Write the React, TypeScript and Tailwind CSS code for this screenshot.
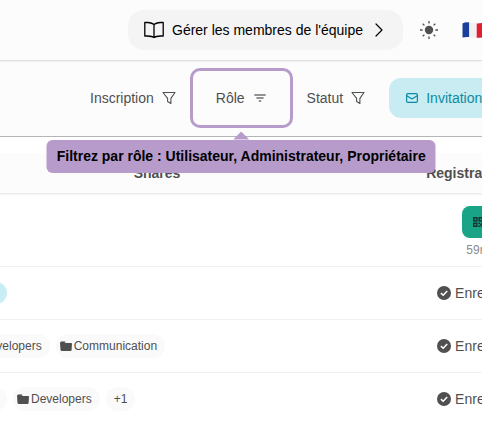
import React from 'react';

type IconProps = { className?: string };

const BookIcon: React.FC<IconProps> = ({ className }) => (
  <svg className={className} viewBox="0 0 20 18" fill="none" stroke="currentColor" strokeWidth="1.3" strokeLinejoin="round" aria-hidden="true">
    <path d="M10 3.600C8.600 2.100 6.400 1.700 3.400 1.500H.8v13.500h2.600c3 .1 5.200.4 6.600 1.500 1.400-1.100 3.600-1.400 6.600-1.500h2.600V1.500h-2.600C13.600 1.700 11.400 2.100 10 3.600zM10 3.600V17" />
  </svg>
);

const ChevronIcon: React.FC<IconProps> = ({ className }) => (
  <svg className={className} viewBox="0 0 8 14" fill="none" stroke="currentColor" strokeWidth="1.2" strokeLinecap="round" strokeLinejoin="round" aria-hidden="true">
    <path d="M1 1l6 6-6 6" />
  </svg>
);

const SunIcon: React.FC<IconProps> = ({ className }) => (
  <svg className={className} viewBox="0 0 18 18" fill="none" stroke="currentColor" strokeWidth="1.3" aria-hidden="true">
    <circle cx="9" cy="9" r="4.200" fill="currentColor" stroke="none" />
    <path d="M9 0v2.600M9 15.400V18M0 9h2.600M15.400 9H18M2.700 2.700l1.700 1.700M13.600 13.600l1.700 1.700M2.700 15.300l1.700-1.700M13.600 4.400l1.700-1.700" />
  </svg>
);

const FlagIcon: React.FC<IconProps> = ({ className }) => (
  <svg className={className} viewBox="0 0 22 16" aria-hidden="true">
    <path fill="#1b3f9c" d="M.5 1.500Q3.500-.2 7.300.6V15Q3.500 14.600.5 15.500z" />
    <path fill="#f1f1f3" d="M7.300.6q3.700.7 7.400.8V15.800q-3.700 0-7.400-.8z" />
    <path fill="#e0202f" d="M14.700 1.400Q18.500 1.500 22 .5V15q-3.500 1-7.300.8z" />
  </svg>
);

const FunnelIcon: React.FC<IconProps> = ({ className }) => (
  <svg className={className} viewBox="0 0 14 14" fill="none" stroke="currentColor" strokeWidth="1.1" strokeLinejoin="round" aria-hidden="true">
    <path d="M1 1.500h12L8.900 7.400v5.100L5.600 10.600V7.400z" />
  </svg>
);

const SortIcon: React.FC<IconProps> = ({ className }) => (
  <svg className={className} viewBox="0 0 12 8" fill="none" stroke="currentColor" strokeWidth="1.400" aria-hidden="true">
    <path d="M.3 1h11.400M2.400 4h7.200M4.800 7h2.400" />
  </svg>
);

const MailIcon: React.FC<IconProps> = ({ className }) => (
  <svg className={className} viewBox="0 0 12 10" fill="none" stroke="currentColor" strokeWidth="1.200" strokeLinejoin="round" aria-hidden="true">
    <rect x=".6" y=".6" width="10.800" height="8.800" rx="1.200" />
    <path d="M.8 2.800L4.800 5.300q1.200.8 2.400 0L11.200 2.800" />
  </svg>
);

const QrIcon: React.FC<IconProps> = ({ className }) => (
  <svg className={className} viewBox="0 0 11 11" fill="none" stroke="currentColor" strokeWidth="1.600" aria-hidden="true">
    <rect x=".8" y=".8" width="3.400" height="3.400" />
    <rect x="6.800" y=".8" width="3.400" height="3.400" />
    <rect x=".8" y="6.800" width="3.400" height="3.400" />
    <path d="M6 6.800h2M9 6.800h2M6 10.200h2M9 10.200h2M7.600 8.500h2" />
  </svg>
);

const CheckIcon: React.FC<IconProps> = ({ className }) => (
  <svg className={className} viewBox="0 0 14 14" aria-hidden="true">
    <circle cx="7" cy="7" r="7" fill="currentColor" />
    <path d="M3.900 7.100l2.300 2.200L10.200 4.900" fill="none" stroke="#fff" strokeWidth="1.500" />
  </svg>
);

const FolderIcon: React.FC<IconProps> = ({ className }) => (
  <svg className={className} viewBox="0 0 12 10" aria-hidden="true">
    <path fill="#9a9a9a" d="M.9.5q0-.5.600-.5h3.200l1.200 1.200H.9z" />
    <path fill="currentColor" d="M0 1.900q0-.8.800-.8h3.400q.6 0 1 .4l.4.400h5.600q.9 0 .8.800l-.4 6.300q-.1.900-.9.900H1.400q-.8 0-.9-.8z" />
  </svg>
);

const Tag: React.FC<{ label: string; folder?: boolean }> = ({ label, folder = false }) => (
  <span className={`flex h-6 items-center gap-0.5 rounded-full bg-[#fafafa] text-xs ${folder ? 'pr-2 pl-1' : 'px-2'}`}>
    {folder && <FolderIcon className="mb-px h-2.5 w-3" />}
    {label}
  </span>
);

const rows: { id: number; cells: React.ReactNode }[] = [
  { id: 1, cells: <span className="h-[22px] w-11 rounded-full bg-[#c9edf4]" /> },
  {
    id: 2,
    cells: (
      <>
        <Tag label="Developers" folder />
        <Tag label="Communication" folder />
      </>
    ),
  },
  {
    id: 3,
    cells: (
      <>
        <span className="h-6 w-11 rounded-full bg-[#fafafa]" />
        <Tag label="Developers" folder />
        <Tag label="+1" />
      </>
    ),
  },
];

const App: React.FC = () => (
  <div className="min-h-screen overflow-hidden bg-white font-['Liberation_Sans',Arial,sans-serif] text-sm whitespace-nowrap text-[#505050]">
    <header className="relative flex h-[61px] items-center overflow-hidden border-b border-[#dedede] bg-[#fcfcfc] pl-32 shadow-xs">
      <button type="button" className="flex h-10 shrink-0 items-center rounded-2xl bg-[#f4f4f4] px-4 text-black">
        <BookIcon className="mr-2 h-[18px] w-5" />
        Gérer les membres de l'équipe
        <ChevronIcon className="mr-1 ml-3 h-3.5 w-2" />
      </button>
      <button type="button" aria-label="Thème" className="ml-[17px] shrink-0">
        <SunIcon className="size-[18px]" />
      </button>
      <button type="button" aria-label="Langue" className="ml-6 shrink-0">
        <FlagIcon className="h-4 w-[22px]" />
      </button>
    </header>

    <div className="flex h-[76px] items-center border-b border-[#b5b5b5] bg-[#fcfcfc] pb-0.5 pl-[90px]">
      <button type="button" className="flex shrink-0 items-center gap-2">
        Inscription
        <FunnelIcon className="size-3.5" />
      </button>
      <div className="relative ml-3.5 shrink-0">
        <button type="button" aria-describedby="role-hint" className="flex h-[60px] items-center gap-[9px] rounded-[10px] border-3 border-[#b79ccb] pr-6 pl-[23px]">
          Rôle
          <SortIcon className="h-2 w-3 text-[#707070]" />
        </button>
        <div className="absolute top-full left-1/2 z-10 mt-1 flex -translate-x-1/2 flex-col items-center">
          <span className="h-2 w-4 bg-[#b79ccb] [clip-path:polygon(50%_0,100%_100%,0_100%)]" />
          <div id="role-hint" role="tooltip" className="rounded-md bg-[#b79ccb] px-2.5 py-1.5 leading-[21px] font-bold text-black">
            Filtrez par rôle : Utilisateur, Administrateur, Propriétaire
          </div>
        </div>
      </div>
      <button type="button" className="ml-3.5 flex shrink-0 items-center gap-2">
        Statut
        <FunnelIcon className="size-3.5" />
      </button>
      <button type="button" className="ml-6 flex h-10 shrink-0 items-center gap-2 rounded-xl bg-[#c9ecf2] px-[17px] text-[#0b8ba5]">
        <MailIcon className="h-2.5 w-3" />
        Invitations
      </button>
    </div>

    <table className="mt-4 -ml-[37px] w-[642px] table-fixed border-separate border-spacing-0">
      <thead className="shadow-xs">
        <tr className="h-[41px] bg-[#fcfcfc]">
          <th className="w-[388px] border-b border-[#ececec] p-0">Shares</th>
          <th className="border-b border-[#ececec] p-0">
            <span className="flex items-center justify-center gap-2.5">
              Registration
              <SortIcon className="h-2 w-3" />
            </span>
          </th>
        </tr>
      </thead>
      <tbody>
        <tr className="h-[73px]">
          <td className="border-b border-[#f0f0f0] p-0" />
          <td className="border-b border-[#f0f0f0] p-0 pt-1">
            <div className="flex flex-col items-center gap-1">
              <button type="button" aria-label="QR code" className="flex h-8 items-center rounded-lg bg-[#19a387] px-[11px] text-[#12352f]">
                <QrIcon className="size-2.5" />
              </button>
              <span className="text-xs text-[#8a8a8a]">59m</span>
            </div>
          </td>
        </tr>
        {rows.map((row) => (
          <tr key={row.id} className="group h-[53px]">
            <td className="border-b border-[#f0f0f0] p-0 group-last:border-white">
              <div className="flex items-center gap-1.5">{row.cells}</div>
            </td>
            <td className="border-b border-[#f0f0f0] p-0 group-last:border-white">
              <div className="flex items-center justify-center gap-1">
                <CheckIcon className="size-3.5" />
                Enregistré
              </div>
            </td>
          </tr>
        ))}
      </tbody>
    </table>
  </div>
);

export default App;
